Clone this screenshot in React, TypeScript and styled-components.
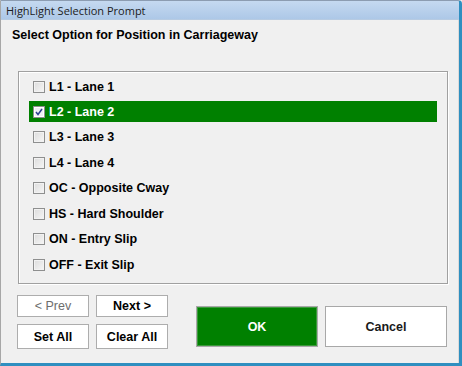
import React from 'react';
import styled, { createGlobalStyle } from 'styled-components';

const GlobalStyle = createGlobalStyle`
  html, body {
    margin: 0;
    padding: 0;
    background: #f0f0f0;
  }
`;

const Window = styled.div`
  width: 462px;
  height: 366px;
  box-sizing: border-box;
  display: flex;
  flex-direction: column;
  background: #f0f0f0;
  border-left: 1px solid #a7a7a7;
  border-top: 1px solid #8c9cb1;
  border-right: 3px solid #2f8fc0;
  border-bottom: 3px solid #2f8fc0;
  border-top-right-radius: 4px;
  overflow: hidden;
  font-family: 'Liberation Sans', Arial, sans-serif;
`;

const TitleBar = styled.div`
  height: 18px;
  flex: none;
  display: flex;
  align-items: center;
  padding-left: 5px;
  background: linear-gradient(to bottom, #c5d9f0, #adc8e7);
  border-bottom: 1px solid #b7cbe2;
  font-family: 'Open Sans', 'Noto Sans', sans-serif;
  font-size: 11px;
  color: #1b1b1b;
`;

const Content = styled.div`
  flex: 1;
  display: flex;
  flex-direction: column;
  border-right: 1px solid #dadada;
`;

const Heading = styled.div`
  margin: 8px 0 0 11px;
  height: 14px;
  line-height: 14px;
  font-size: 12.5px;
  font-weight: bold;
  color: #000;
`;

const GroupBox = styled.div`
  margin: 29px 0 0 17px;
  width: 430px;
  height: 213px;
  box-sizing: border-box;
  border: 1px solid #a0a0a0;
  box-shadow: inset 1px 1px 0 #fff, 1px 1px 0 #fff;
  padding: 4px 10px 0 10px;
  display: flex;
  flex-direction: column;
`;

const Row = styled.div<{ $selected?: boolean }>`
  height: 21px;
  margin-bottom: 4.45px;
  display: flex;
  align-items: center;
  padding-left: 4px;
  background: ${(p) => (p.$selected ? '#008000' : 'transparent')};
  color: ${(p) => (p.$selected ? '#fff' : '#000')};
  font-size: 12.5px;
  font-weight: bold;
`;

const Box = styled.span<{ $checked?: boolean }>`
  width: 10px;
  height: 10px;
  flex: none;
  margin-right: 4px;
  border: 1px solid #8e8f8f;
  box-sizing: content-box;
  background: ${(p) =>
    p.$checked ? '#eef0f4' : 'linear-gradient(135deg, #dcdcdc, #f6f6f6)'};
  box-shadow: inset 0 0 0 1px ${(p) => (p.$checked ? '#fff' : '#f2f2f2')};
  display: flex;
  align-items: center;
  justify-content: center;
`;

const Footer = styled.div`
  display: flex;
  align-items: flex-start;
  margin: 11px 0 0 16px;
`;

const SmallGrid = styled.div`
  display: grid;
  grid-template-columns: 72px 72px;
  grid-template-rows: 22px 25px;
  column-gap: 7px;
  row-gap: 7px;
`;

const SmallButton = styled.button<{ $disabled?: boolean }>`
  margin: 0;
  padding: 0;
  border: 1px solid #adadad;
  background: #fff;
  font-family: 'Liberation Sans', Arial, sans-serif;
  font-size: 12.5px;
  font-weight: ${(p) => (p.$disabled ? 'normal' : 'bold')};
  color: ${(p) => (p.$disabled ? '#6d6d6d' : '#000')};
`;

const BigButtons = styled.div`
  display: flex;
  gap: 7px;
  margin: 11px 0 0 28px;
`;

const BigButton = styled.button<{ $primary?: boolean }>`
  margin: 0;
  padding: 0;
  width: 122px;
  height: 41px;
  border: 1px solid #a8a8a8;
  background: ${(p) => (p.$primary ? '#008000' : '#fff')};
  color: ${(p) => (p.$primary ? '#fff' : '#1a1a1a')};
  box-shadow: inset 0 0 0 1px ${(p) => (p.$primary ? '#3a9a3a' : '#fff')};
  font-family: 'Liberation Sans', Arial, sans-serif;
  font-size: 12.5px;
  font-weight: bold;
`;

const options = [
  'L1 - Lane 1',
  'L2 - Lane 2',
  'L3 - Lane 3',
  'L4 - Lane 4',
  'OC - Opposite Cway',
  'HS - Hard Shoulder',
  'ON - Entry Slip',
  'OFF - Exit Slip',
];

const Check = () => (
  <svg width="8" height="8" viewBox="0 0 8 8">
    <path d="M1 4 L3 6.5 L7 1" fill="none" stroke="#2c3f8f" strokeWidth="1.5" />
  </svg>
);

const App: React.FC = () => {
  const selected = 1;
  return (
    <>
      <GlobalStyle />
      <Window>
        <TitleBar>HighLight Selection Prompt</TitleBar>
        <Content>
          <Heading>Select Option for Position in Carriageway</Heading>
          <GroupBox>
            {options.map((opt, i) => (
              <Row key={opt} $selected={i === selected}>
                <Box $checked={i === selected}>{i === selected && <Check />}</Box>
                {opt}
              </Row>
            ))}
          </GroupBox>
          <Footer>
            <SmallGrid>
              <SmallButton $disabled>&lt; Prev</SmallButton>
              <SmallButton>Next &gt;</SmallButton>
              <SmallButton>Set All</SmallButton>
              <SmallButton>Clear All</SmallButton>
            </SmallGrid>
            <BigButtons>
              <BigButton $primary>OK</BigButton>
              <BigButton>Cancel</BigButton>
            </BigButtons>
          </Footer>
        </Content>
      </Window>
    </>
  );
};

export default App;
